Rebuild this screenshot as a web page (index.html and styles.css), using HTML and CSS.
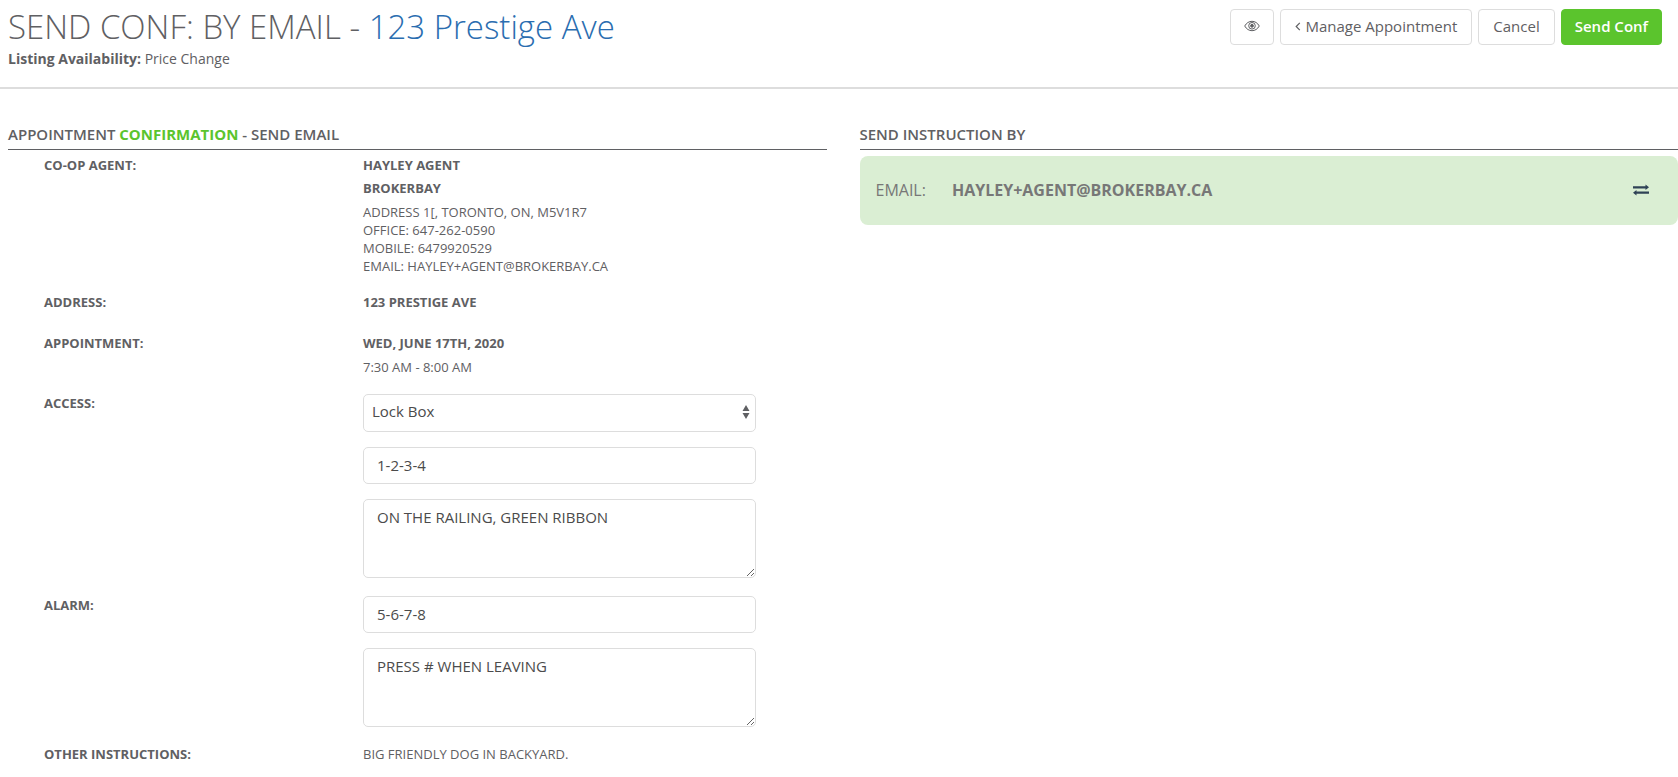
FILE: index.html
```
<!DOCTYPE html>
<html lang="en">
<head>
<meta charset="utf-8">
<title>Send Conf: By Email</title>
<link rel="stylesheet" href="styles.css">
</head>
<body>
<header class="page-header">
  <div class="heading">
    <h1 class="title">SEND CONF: BY EMAIL - <a class="title-link" href="#listing">123 Prestige Ave</a></h1>
    <p class="subtitle"><strong>Listing Availability:</strong> Price Change</p>
  </div>
  <div class="actions">
    <button class="btn btn-icon" type="button" aria-label="Preview">
      <svg width="16" height="12" viewBox="0 0 16 12" fill="none" stroke="currentColor" aria-hidden="true"><path d="M.7 6C2.500 2.900 5 1.300 8 1.300S13.500 2.900 15.300 6C13.500 9.100 11 10.700 8 10.700S2.500 9.100.7 6Z"/><circle cx="8" cy="5.800" r="3.300"/><circle cx="8" cy="5.800" r="1.400" fill="currentColor"/></svg>
    </button>
    <button class="btn" type="button"><svg width="6" height="10" viewBox="0 0 6 10" fill="none" stroke="currentColor" stroke-width="1.200" aria-hidden="true"><path d="M4.800 1.800 1.200 5.500l3.600 3.700"/></svg>Manage Appointment</button>
    <button class="btn" type="button">Cancel</button>
    <button class="btn btn-primary" type="button">Send Conf</button>
  </div>
</header>
<main class="columns">
  <section>
    <h2 class="section-title">APPOINTMENT <span class="accent">CONFIRMATION</span> - SEND EMAIL</h2>
    <dl class="details">
      <dt>CO-OP AGENT:</dt>
      <dd>
        <p class="lead">HAYLEY AGENT</p>
        <p class="lead">BROKERBAY</p>
        <p>ADDRESS 1[, TORONTO, ON, M5V1R7</p>
        <p>OFFICE: 647-262-0590</p>
        <p>MOBILE: 6479920529</p>
        <p>EMAIL: HAYLEY+AGENT@BROKERBAY.CA</p>
      </dd>
      <dt>ADDRESS:</dt>
      <dd><p class="lead">123 PRESTIGE AVE</p></dd>
      <dt>APPOINTMENT:</dt>
      <dd>
        <p class="lead">WED, JUNE 17TH, 2020</p>
        <p>7:30 AM - 8:00 AM</p>
      </dd>
      <dt><label for="access-type">ACCESS:</label></dt>
      <dd class="fields">
        <div class="select-wrap">
          <select class="control select" id="access-type"><option>Lock Box</option></select>
          <svg class="select-arrows" width="8" height="14" viewBox="0 0 8 14" fill="currentColor" aria-hidden="true"><path d="M4 0 7.500 6H.5ZM4 14 .5 8h7Z"/></svg>
        </div>
        <input class="control" type="text" value="1-2-3-4" aria-label="Lock box code">
        <textarea class="control area" aria-label="Access notes">ON THE RAILING, GREEN RIBBON</textarea>
      </dd>
      <dt><label for="alarm-code">ALARM:</label></dt>
      <dd class="fields">
        <input class="control" id="alarm-code" type="text" value="5-6-7-8">
        <textarea class="control area" aria-label="Alarm notes">PRESS # WHEN LEAVING</textarea>
      </dd>
      <dt>OTHER INSTRUCTIONS:</dt>
      <dd><p>BIG FRIENDLY DOG IN BACKYARD.</p></dd>
    </dl>
  </section>
  <section>
    <h2 class="section-title">SEND INSTRUCTION BY</h2>
    <div class="method">
      <span>EMAIL:</span>
      <strong>HAYLEY+AGENT@BROKERBAY.CA</strong>
      <button class="swap" type="button" aria-label="Change method">
        <svg width="16" height="12" viewBox="0 0 16 12" fill="currentColor" aria-hidden="true"><path d="M0 2.200h12.500V.5L16 3.300 12.500 6.100V4.400H0ZM16 7.600H3.500V5.900L0 8.700l3.500 2.800V9.800H16Z"/></svg>
      </button>
    </div>
  </section>
</main>
</body>
</html>
```
FILE: styles.css
```
* {
  box-sizing: border-box;
}

body {
  margin: 0;
  background: #fff;
  color: #5f6063;
  font-family: "Open Sans", "Liberation Sans", sans-serif;
  font-size: 13px;
  line-height: 18px;
}

h1, h2, p, dl, dd {
  margin: 0;
}

.page-header {
  display: flex;
  justify-content: space-between;
  align-items: flex-start;
  padding: 4px 16px 18px 8px;
  border-bottom: 2px solid #ddd;
}

.title {
  font-size: 33px;
  font-weight: 300;
  line-height: 45px;
}

.title-link {
  color: #2a6db0;
  text-decoration: none;
}

.subtitle {
  font-size: 14px;
  line-height: 20px;
}

.actions {
  display: flex;
  gap: 6px;
  padding-top: 5px;
}

.btn {
  display: flex;
  align-items: center;
  gap: 4px;
  height: 36px;
  padding: 0 14px 3px;
  border: 1px solid #ddd;
  border-radius: 4px;
  background: #fff;
  color: #5f6063;
  font: inherit;
  font-size: 15px;
}

.btn-icon {
  padding: 0 13px 3px;
}

.btn-primary {
  padding: 0 13px 3px;
  border-color: #5bc42d;
  background: #5bc42d;
  color: #fff;
  font-weight: 600;
}

.columns {
  display: grid;
  grid-template-columns: 1fr 1fr;
  gap: 33px;
  padding: 34px 0 10px 8px;
}

.section-title {
  padding-bottom: 4px;
  margin-bottom: 6px;
  border-bottom: 1px solid #5f6063;
  font-size: 15px;
  font-weight: 600;
  line-height: 22px;
}

.accent {
  color: #5bc42d;
  font-weight: 700;
}

.details {
  display: grid;
  grid-template-columns: 319px 1fr;
  row-gap: 18px;
  padding: 0 71px 0 36px;
}

dt, .lead {
  font-weight: 700;
}

.lead {
  margin-bottom: 5px;
}

.lead + p:not(.lead) {
  margin-top: 6px;
}

.lead:has(+ p:not(.lead)) {
  margin-bottom: 0;
}

.fields {
  display: grid;
  gap: 15px;
}

.select-wrap {
  display: grid;
  position: relative;
}

.control {
  display: block;
  width: 100%;
  height: 37px;
  padding: 0 13px 2px;
  border: 1px solid #ddd;
  border-radius: 5px;
  background: #fff;
  color: #4b4b4b;
  font: inherit;
  font-size: 15px;
}

.select {
  height: 38px;
  padding: 0 24px 4px 8px;
  appearance: none;
}

.select-arrows {
  position: absolute;
  top: 11px;
  right: 6px;
  pointer-events: none;
}

.area {
  height: 79px;
  padding-top: 7px;
  line-height: 20px;
}

.method {
  display: flex;
  align-items: center;
  gap: 26px;
  min-height: 69px;
  padding: 0 29px 2px 16px;
  border-radius: 8px;
  background: #daeed3;
  color: #777;
  font-size: 16px;
}

.swap {
  display: flex;
  margin-left: auto;
  padding: 0;
  border: 0;
  background: none;
  color: #2f4256;
}
```
